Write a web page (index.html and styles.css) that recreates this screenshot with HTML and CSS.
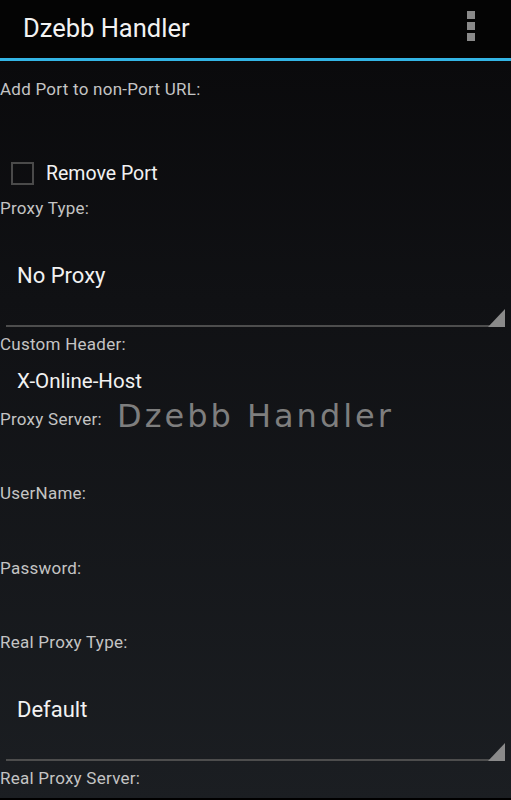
FILE: index.html
```html
<!DOCTYPE html>
<html>
<head>
<meta charset="utf-8">
<link rel="stylesheet" href="styles.css">
</head>
<body>
<div class="screen">
  <header class="bar">
    <span class="title">Dzebb Handler</span>
    <span class="menu"><i></i><i></i><i></i></span>
  </header>
  <main class="form">
    <div class="label first">Add Port to non-Port URL:</div>
    <div class="edit short"></div>
    <label class="check-row"><span class="box"></span><span class="check-text">Remove Port</span></label>
    <div class="label">Proxy Type:</div>
    <div class="spinner"><span class="spin-text">No Proxy</span><span class="tri"></span></div>
    <div class="label after-spin">Custom Header:</div>
    <div class="edit filled">X-Online-Host</div>
    <div class="label">Proxy Server:</div>
    <div class="edit"></div>
    <div class="label">UserName:</div>
    <div class="edit"></div>
    <div class="label">Password:</div>
    <div class="edit"></div>
    <div class="label">Real Proxy Type:</div>
    <div class="spinner"><span class="spin-text">Default</span><span class="tri"></span></div>
    <div class="label after-spin2">Real Proxy Server:</div>
  </main>
  <div class="watermark">Dzebb Handler</div>
</div>
</body>
</html>
```
FILE: styles.css
```css
html, body {
  margin: 0;
  padding: 0;
  background: #000;
}
.screen {
  position: relative;
  width: 511px;
  height: 800px;
  overflow: hidden;
  font-family: Roboto, "Noto Sans", sans-serif;
  background: linear-gradient(to bottom, #0a0a0c 60px, #101114 300px, #1b1e22 800px);
  border-bottom: 2px solid #000;
  box-sizing: border-box;
}
.bar {
  height: 58px;
  background: #040404;
  border-bottom: 3px solid #33b5e5;
  display: flex;
  align-items: center;
  justify-content: space-between;
  padding: 0 36px 0 23px;
}
.title {
  color: #f2f2f2;
  font-size: 25.5px;
  line-height: 30px;
  margin-top: -3px;
}
.menu {
  display: flex;
  flex-direction: column;
  gap: 3px;
  margin-top: -6px;
}
.menu i {
  display: block;
  width: 8px;
  height: 8px;
  background: #8a8a8a;
}
.form {
  display: flex;
  flex-direction: column;
}
.label {
  height: 20px;
  line-height: 20px;
  font-size: 17px;
  letter-spacing: 0.25px;
  color: #c4c4c4;
  white-space: nowrap;
}
.label.first { margin-top: 18px; }
.label.after-spin { margin-top: 7px; }
.label.after-spin2 { margin-top: 7px; }
.edit {
  height: 54.3px;
  padding-left: 17px;
  font-size: 20.5px;
  line-height: 54px;
  color: #f2f2f2;
}
.edit.short { height: 50px; }
.edit.filled { height: 55px; }
.check-row {
  height: 49px;
  display: flex;
  align-items: center;
  padding-left: 11px;
}
.box {
  width: 19px;
  height: 19px;
  border: 2px solid #4a4a4a;
  margin-right: 12px;
}
.check-text {
  font-size: 19.5px;
  color: #f2f2f2;
}
.spinner {
  position: relative;
  height: 99px;
  margin: 0 6px;
  border-bottom: 2px solid #4d4d4d;
  display: flex;
  align-items: center;
  padding-left: 11px;
  padding-top: 8px;
}
.spin-text {
  font-size: 22px;
  color: #f2f2f2;
}
.tri {
  position: absolute;
  right: 0;
  bottom: -2px;
  width: 17px;
  height: 18px;
  background: #8a8a8a;
  clip-path: polygon(100% 0, 100% 100%, 0 100%);
}
.watermark {
  position: absolute;
  left: 117px;
  top: 396px;
  font-family: "DejaVu Sans", sans-serif;
  font-size: 32px;
  line-height: 40px;
  color: #7e7e7e;
  letter-spacing: 3px;
}
```
